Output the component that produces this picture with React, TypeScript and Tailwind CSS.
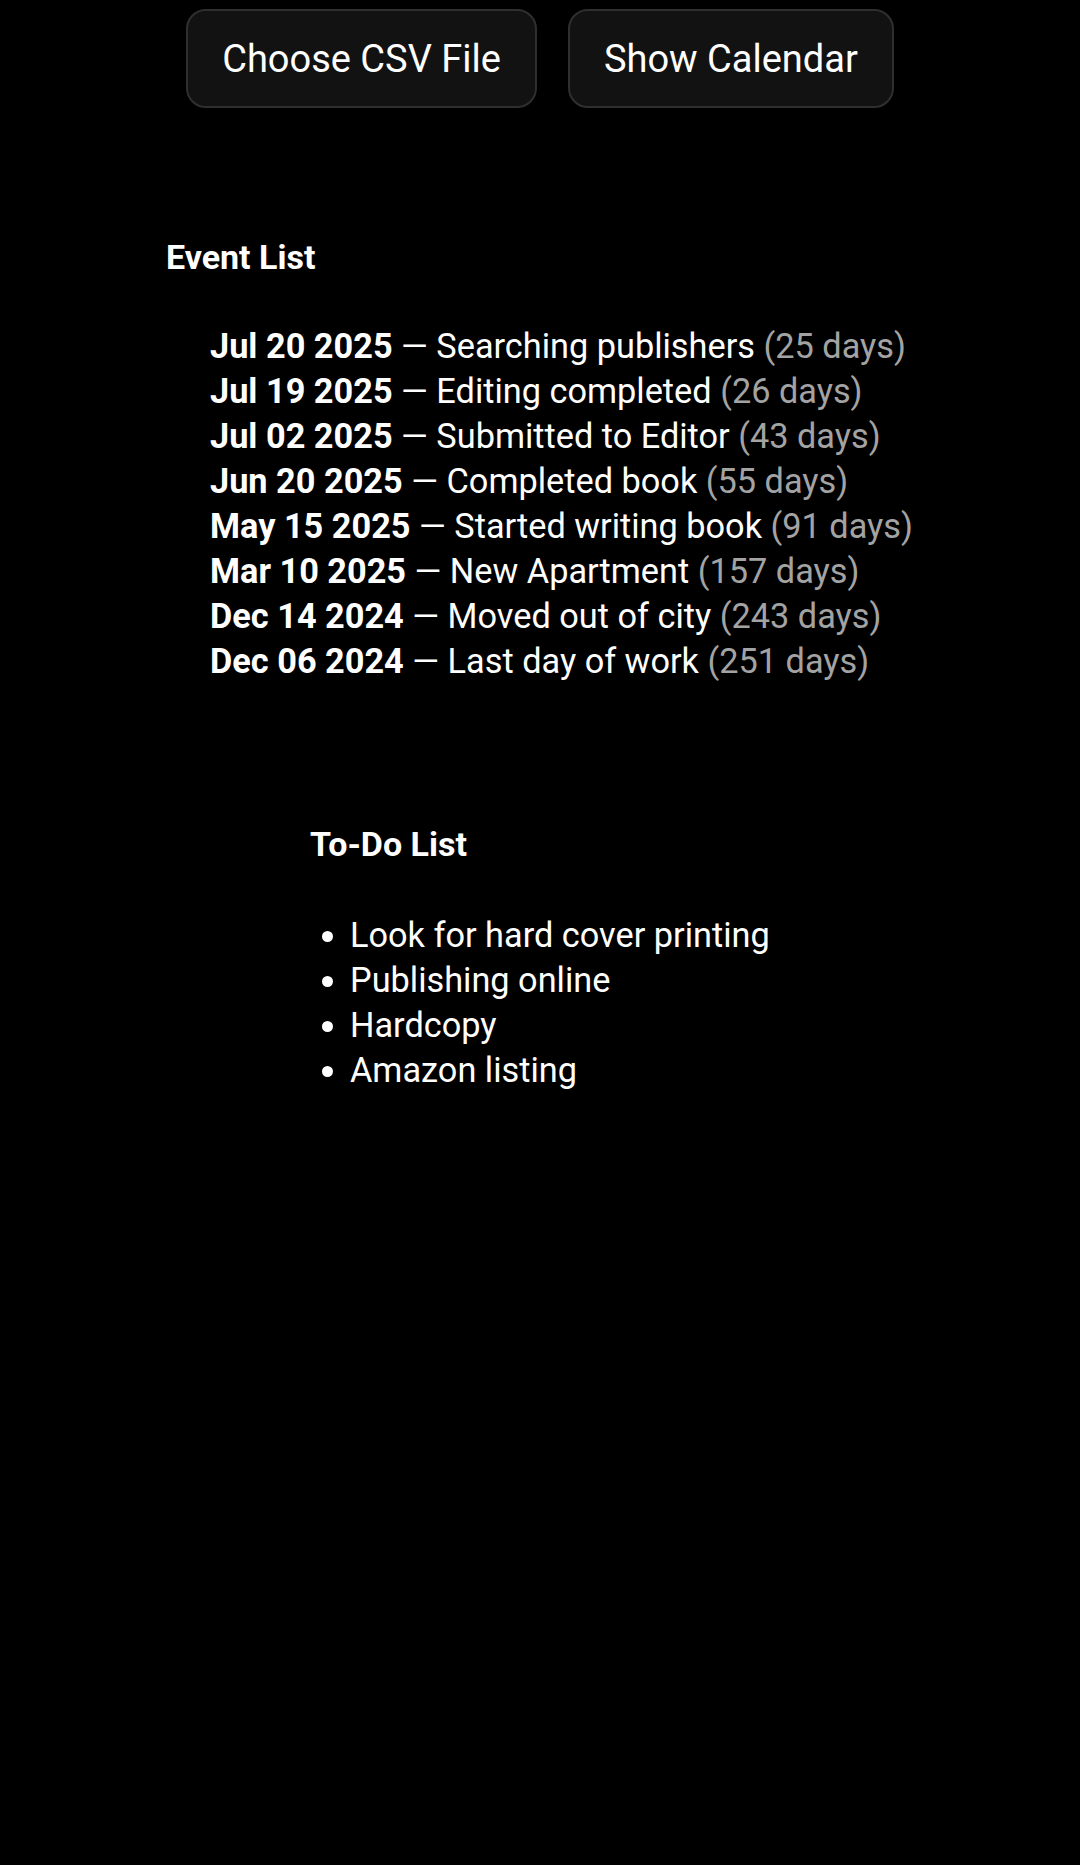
import React from "react";

type EventItem = {
  date: string;
  title: string;
  days: number;
};

const events: EventItem[] = [
  { date: "Jul 20 2025", title: "Searching publishers", days: 25 },
  { date: "Jul 19 2025", title: "Editing completed", days: 26 },
  { date: "Jul 02 2025", title: "Submitted to Editor", days: 43 },
  { date: "Jun 20 2025", title: "Completed book", days: 55 },
  { date: "May 15 2025", title: "Started writing book", days: 91 },
  { date: "Mar 10 2025", title: "New Apartment", days: 157 },
  { date: "Dec 14 2024", title: "Moved out of city", days: 243 },
  { date: "Dec 06 2024", title: "Last day of work", days: 251 },
];

const todos = [
  "Look for hard cover printing",
  "Publishing online",
  "Hardcopy",
  "Amazon listing",
];

function ActionButton({ label }: { label: string }) {
  return (
    <button
      type="button"
      className="h-[99px] rounded-[20px] border-2 border-[#2f2f2f] bg-[#121212] px-[34px] text-[38px] leading-none text-white"
    >
      {label}
    </button>
  );
}

function EventList() {
  return (
    <section className="ml-[166px] mt-[129px]">
      <h3 className="text-[34px] font-bold leading-[40px]">Event List</h3>
      <ul className="mt-[47px] pl-[44px] text-[34.3px] leading-[45px]">
        {events.map((e) => (
          <li key={e.date} className="whitespace-nowrap">
            <strong className="font-bold">{e.date}</strong> — {e.title}{" "}
            <span className="text-[#a3a3a3]">({e.days} days)</span>
          </li>
        ))}
      </ul>
    </section>
  );
}

function TodoList() {
  return (
    <section className="ml-[310px] mt-[140px]">
      <h3 className="text-[34px] font-bold leading-[40px]">To-Do List</h3>
      <ul className="mt-[49px] list-disc pl-10 text-[34.3px] leading-[45px]">
        {todos.map((t) => (
          <li key={t}>{t}</li>
        ))}
      </ul>
    </section>
  );
}

export default function App() {
  return (
    <div className="min-h-[1865px] bg-black text-white [font-family:Roboto,'Liberation_Sans',sans-serif]">
      <div className="flex justify-center gap-[31px] pt-[9px]">
        <ActionButton label="Choose CSV File" />
        <ActionButton label="Show Calendar" />
      </div>
      <EventList />
      <TodoList />
    </div>
  );
}
